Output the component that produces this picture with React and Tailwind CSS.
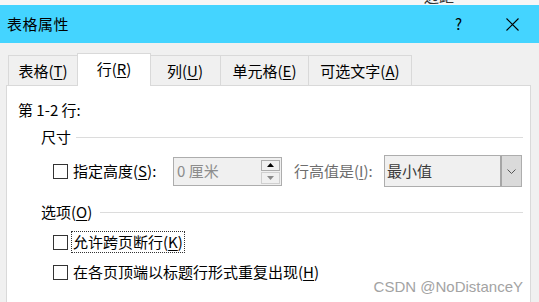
import React from 'react';

const font = { fontFamily: '"Noto Sans CJK SC", "Noto Sans", sans-serif' };

// label with underlined access key, e.g. 表格(T)
const Key = ({ pre, k, post = '' }) => (
  <>
    {pre}(<span className="underline underline-offset-2">{k}</span>){post}
  </>
);

const tabs = [
  { w: 'w-[70px]', label: <Key pre="表格" k="T" /> },
  { w: 'w-[74px]', label: <Key pre="行" k="R" />, active: true },
  { w: 'w-[70px]', label: <Key pre="列" k="U" /> },
  { w: 'w-[88px]', label: <Key pre="单元格" k="E" /> },
  { w: 'w-[103px]', label: <Key pre="可选文字" k="A" /> },
];

const CheckBox = () => (
  <span className="block w-[15px] h-[15px] border border-[#333333] bg-white shrink-0" />
);

const Section = ({ title, lineFrom }) => (
  <div className="flex items-center h-[20px] pl-[34px]">
    <span className="leading-[20px]">{title}</span>
    <span className={`h-px bg-[#dcdcdc] flex-1 mr-[7px] ${lineFrom}`} />
  </div>
);

const App = () => {
  return (
    <div className="w-[539px] h-[302px] bg-[#f0f0f0] overflow-hidden text-[15px] text-black relative" style={font}>
      {/* window behind, only the bottom edge shows */}
      <div className="h-[5px] overflow-hidden bg-[#f6f6f6] pl-[424px]">
        <div className="mt-[-12px] leading-[16px] text-[15px] text-[#333]">边距</div>
      </div>

      {/* title bar */}
      <div className="h-[38px] bg-[#44d4ff] flex items-center pl-[7px]">
        <span className="leading-[20px] tracking-[0.5px]">表格属性</span>
        <span className="ml-auto leading-[20px] mr-[44px]">?</span>
        <svg width="13" height="13" viewBox="0 0 13 13" className="mr-[20px]">
          <path d="M0.5 0.5 L12.5 12.5 M12.5 0.5 L0.5 12.5" stroke="#000" strokeWidth="1.1" />
        </svg>
      </div>

      {/* tabs */}
      <div className="flex items-end pl-[8px] pt-[10px] h-[42px]">
        {tabs.map((t, i) => (
          <div
            key={i}
            className={`${t.w} flex items-center justify-center border-t border-r border-[#d9d9d9] ${
              i === 0 ? 'border-l' : ''
            } ${
              t.active
                ? 'h-[33px] bg-white border-l relative z-10 -mb-px -ml-px pb-[2px]'
                : 'h-[30px] bg-[#f0f0f0]'
            } ${i === 2 ? '-ml-px w-[71px]' : ''}`}
          >
            <span className="leading-[20px]">{t.label}</span>
          </div>
        ))}
      </div>

      {/* panel */}
      <div className="ml-[6px] w-[525px] h-[230px] bg-white border border-[#d9d9d9]">
        <div className="pl-[11px] pt-[14px] leading-[20px]">第 1-2 行:</div>

        <div className="mt-[7px]">
          <Section title="尺寸" lineFrom="ml-[5px]" />
        </div>

        <div className="flex items-center h-[32px] mt-[8px] pl-[46px]">
          <CheckBox />
          <span className="ml-[5px] w-[100px] leading-[20px]">
            <Key pre="指定高度" k="S" post=":" />
          </span>
          {/* spin box */}
          <div className="w-[109px] h-[29px] border border-[#adadad] bg-[#f0f0f0] flex items-center">
            <span className="pl-[3px] text-[#8c8c8c] leading-[20px] flex-1">0 厘米</span>
            <div className="w-[20px] h-[27px] flex flex-col gap-[1px] pt-[2px] pb-px pr-px">
              <div className="flex-1 border border-[#adadad] bg-[#f0f0f0] flex items-center justify-center">
                <svg width="7" height="4" viewBox="0 0 7 4"><path d="M3.5 0 L7 4 L0 4 Z" fill="#000" /></svg>
              </div>
              <div className="flex-1 border border-[#cfcfcf] bg-[#f0f0f0] flex items-center justify-center">
                <svg width="7" height="4" viewBox="0 0 7 4"><path d="M0 0 L7 0 L3.5 4 Z" fill="#8a8a8a" /></svg>
              </div>
            </div>
          </div>
          <span className="ml-[12px] w-[90px] leading-[20px] text-[#6d6d6d]">
            <Key pre="行高值是" k="I" post=":" />
          </span>
          {/* dropdown */}
          <div className="w-[138px] h-[32px] border border-[#adadad] bg-[#f0f0f0] flex">
            <span className="pl-[2px] flex-1 self-center leading-[20px] text-[#3a3a3a]">最小值</span>
            <div className="w-[21px] h-full bg-[#dadada] border-l-2 border-[#a6a6a6] flex items-center justify-center">
              <svg width="9" height="5" viewBox="0 0 9 5"><path d="M0.5 0.5 L4.5 4.5 L8.5 0.5" fill="none" stroke="#555" strokeWidth="1" /></svg>
            </div>
          </div>
        </div>

        <div className="mt-[15px]">
          <Section title={<Key pre="选项" k="O" />} lineFrom="ml-[8px]" />
        </div>

        <div className="flex items-center h-[22px] mt-[9px] pl-[46px]">
          <CheckBox />
          <span className="ml-[4px] leading-[20px] outline-1 outline-dotted outline-[#333] px-px">
            <Key pre="允许跨页断行" k="K" />
          </span>
        </div>

        <div className="flex items-center h-[22px] mt-[8px] pl-[46px]">
          <CheckBox />
          <span className="ml-[5px] leading-[20px]">
            <Key pre="在各页顶端以标题行形式重复出现" k="H" />
          </span>
        </div>
      </div>

      {/* watermark */}
      <div
        className="absolute right-[16px] bottom-[6px] text-[15px] leading-[18px] text-[#a3a3a3]"
        style={{ fontFamily: '"Liberation Sans", Arial, sans-serif' }}
      >
        CSDN @NoDistanceY
      </div>
    </div>
  );
};

export default App;
